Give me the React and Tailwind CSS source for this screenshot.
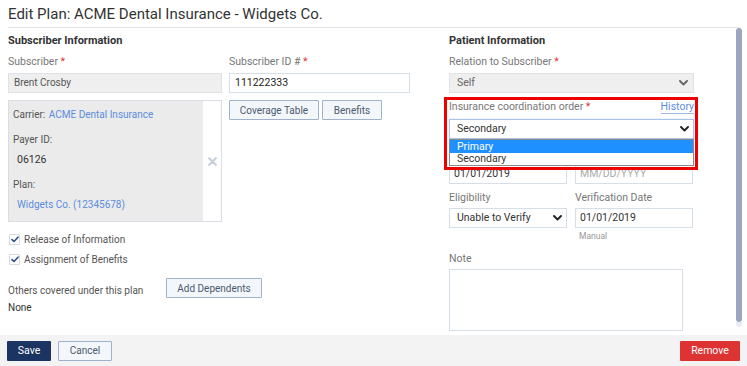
import React from 'react';

const Chevron = ({ color = '#222' }) => (
  <svg width="9" height="6" viewBox="0 0 9 6" className="shrink-0">
    <path d="M1 1 L4.5 4.5 L8 1" fill="none" stroke={color} strokeWidth="1.9" strokeLinecap="round" strokeLinejoin="round" />
  </svg>
);

const Check = () => (
  <div className="w-[11px] h-[11px] border border-[#d3dbe5] bg-white flex items-center justify-center rounded-[1px]">
    <svg width="8" height="7" viewBox="0 0 8 7">
      <path d="M1 3.6 L3 5.5 L7 1.2" fill="none" stroke="#2c4f80" strokeWidth="1.6" strokeLinecap="round" strokeLinejoin="round" />
    </svg>
  </div>
);

const Req = () => <span className="text-[#d33]"> *</span>;

const Label = ({ children, className = '' }) => (
  <div className={`text-[10.5px] leading-[13px] text-[#777] ${className}`}>{children}</div>
);

const Btn = ({ children, className = '' }) => (
  <button className={`h-[20px] border border-[#9fb2c9] bg-[#f3f6fa] text-[10px] text-[#4b5a6e] rounded-[1px] ${className}`}>
    {children}
  </button>
);

export default function App() {
  return (
    <div className="w-[747px] h-[366px] flex flex-col bg-white overflow-hidden font-['Roboto',sans-serif]">
      {/* Title */}
      <div className="h-[28px] mx-2 border-b border-[#e4e4e4] pt-[5px] text-[15px] leading-[19px] text-[#333]">
        Edit Plan: ACME Dental Insurance - Widgets Co.
      </div>

      <div className="flex-1 flex min-h-0">
        <div className="flex-1 flex pl-2">
          {/* Left column */}
          <div className="w-[403px]">
            <div className="pt-[6px] text-[11px] font-bold leading-[14px] text-[#333]">Subscriber Information</div>
            <div className="grid grid-cols-[214px_181px] gap-x-[7px]">
              <Label className="mt-[7px]">Subscriber<Req /></Label>
              <Label className="mt-[7px]">Subscriber ID #<Req /></Label>
              <div className="mt-[5px] h-[20px] border border-[#dfe3e8] bg-[#efefef] px-[5px] text-[10px] leading-[18px] text-[#555]">Brent Crosby</div>
              <div className="mt-[5px] h-[20px] border border-[#d6dee7] bg-white px-[5px] text-[10.5px] leading-[18px] text-[#222]">111222333</div>

              <div className="mt-[7px] h-[122px] border border-[#d8dde3] flex">
                <div className="w-[194px] bg-[#ebebeb] pl-[4px] text-[10px] leading-[13px] text-[#555]">
                  <div className="mt-[7px]">Carrier: <span className="ml-[1px] text-[#5b8ce0]">ACME Dental Insurance</span></div>
                  <div className="mt-[12px]">Payer ID:</div>
                  <div className="mt-[7px] pl-[4px] text-[#333] text-[10.5px]">06126</div>
                  <div className="mt-[12px]">Plan:</div>
                  <div className="mt-[7px] pl-[4px] text-[#5b8ce0]">Widgets Co. (12345678)</div>
                </div>
                <div className="flex-1 flex items-center justify-center">
                  <svg width="9" height="9" viewBox="0 0 9 9">
                    <path d="M1.2 1.2 L7.8 7.8 M7.8 1.2 L1.2 7.8" stroke="#c6cfda" strokeWidth="2.2" strokeLinecap="round" />
                  </svg>
                </div>
              </div>
              <div className="mt-[7px] flex gap-[3px] items-start">
                <Btn className="w-[90px]">Coverage Table</Btn>
                <Btn className="w-[60px]">Benefits</Btn>
              </div>
            </div>

            <div className="mt-[11px] flex items-center gap-[4px] pl-[1px] text-[10px] leading-[13px] text-[#555]">
              <Check />Release of Information
            </div>
            <div className="mt-[7px] flex items-center gap-[4px] pl-[1px] text-[10px] leading-[13px] text-[#555]">
              <Check />Assignment of Benefits
            </div>

            <div className="mt-[12px] flex items-center">
              <div className="w-[158px] text-[10px] leading-[13px] text-[#555] pt-[4px]">Others covered under this plan</div>
              <Btn className="w-[96px]">Add Dependents</Btn>
            </div>
            <div className="mt-[3px] text-[10px] leading-[13px] text-[#333]">None</div>
          </div>

          {/* Right column */}
          <div className="ml-[38px] w-[245px]">
            <div className="pt-[6px] text-[11px] font-bold leading-[14px] text-[#333]">Patient Information</div>
            <Label className="mt-[7px]">Relation to Subscriber<Req /></Label>
            <div className="mt-[5px] h-[20px] border border-[#dfe3e8] bg-[#efefef] pl-[7px] pr-[5px] flex items-center justify-between text-[10.5px] text-[#666]">
              Self<Chevron color="#666" />
            </div>

            <div className="relative">
              <div className="mt-[7px] flex justify-between">
                <Label>Insurance coordination order<Req /></Label>
                <span className="text-[10.5px] leading-[13px] text-[#5b8ce0] border-b border-[#9db8e8]">History</span>
              </div>
              <div className="relative mt-[5px]">
                <div className="h-[20px] border border-[#aac3e6] bg-white pl-[7px] pr-[4px] flex items-center justify-between text-[10.5px] text-[#333] shadow-[0_0_2px_#c8d9f2]">
                  Secondary<Chevron />
                </div>
                <div className="absolute z-20 left-0 right-0 top-full border border-[#8a8a8a] bg-white text-[10.5px] leading-[12px]">
                  <div className="bg-[#1e90ff] text-white pl-[7px] h-[13px] leading-[13px]">Primary</div>
                  <div className="text-[#333] pl-[7px] h-[12px]">Secondary</div>
                </div>
              </div>
              <div className="absolute z-30 left-[-5px] right-[-4px] top-[-3px] bottom-[-31px] border-[3px] border-[#ee0000] pointer-events-none" />
            </div>

            <div className="grid grid-cols-[118px_118px] gap-x-[8px]">
              {/* date labels lie under the open list */}
              <div className="mt-[7px] h-[13px]" />
              <div className="mt-[7px] h-[13px]" />
              <div className="mt-[5px] h-[20px] border border-[#d6dee7] px-[4px] text-[10.5px] leading-[18px] text-[#333]">01/01/2019</div>
              <div className="mt-[5px] h-[20px] border border-[#d6dee7] px-[4px] text-[10.5px] leading-[18px] text-[#aaa]">MM/DD/YYYY</div>

              <Label className="mt-[7px]">Eligibility</Label>
              <Label className="mt-[7px]">Verification Date</Label>
              <div className="mt-[4px] h-[20px] border border-[#d6dee7] pl-[7px] pr-[4px] flex items-center justify-between text-[10.5px] text-[#333]">
                Unable to Verify<Chevron />
              </div>
              <div className="mt-[4px] h-[20px] border border-[#d6dee7] px-[4px] text-[10.5px] leading-[18px] text-[#333]">01/01/2019</div>
              <div />
              <div className="pl-[4px] pt-[2px] text-[8.5px] leading-[12px] text-[#999]">Manual</div>
            </div>

            <Label className="mt-[10px]">Note</Label>
            <div className="mt-[4px] w-[234px] h-[62px] border border-[#d6dee7]" />
          </div>
        </div>

        {/* Scrollbar */}
        <div className="w-[13px] pl-[2px]">
          <div className="w-[6px] h-[294px] rounded-full bg-[#9ba7bf]" />
          <div className="w-[6px] h-[5px] rounded-b-full bg-[#e8ecf4]" />
        </div>
      </div>

      {/* Footer */}
      <div className="h-[31px] shrink-0 bg-[#f3f3f3] flex items-center justify-between px-[7px]">
        <div className="flex gap-[7px]">
          <button className="w-[44px] h-[20px] bg-[#1b3461] text-white text-[10.5px] rounded-[1px]">Save</button>
          <Btn className="w-[54px]">Cancel</Btn>
        </div>
        <button className="w-[60px] h-[20px] bg-[#dd3333] text-white text-[10.5px] rounded-[1px]">Remove</button>
      </div>
    </div>
  );
}
